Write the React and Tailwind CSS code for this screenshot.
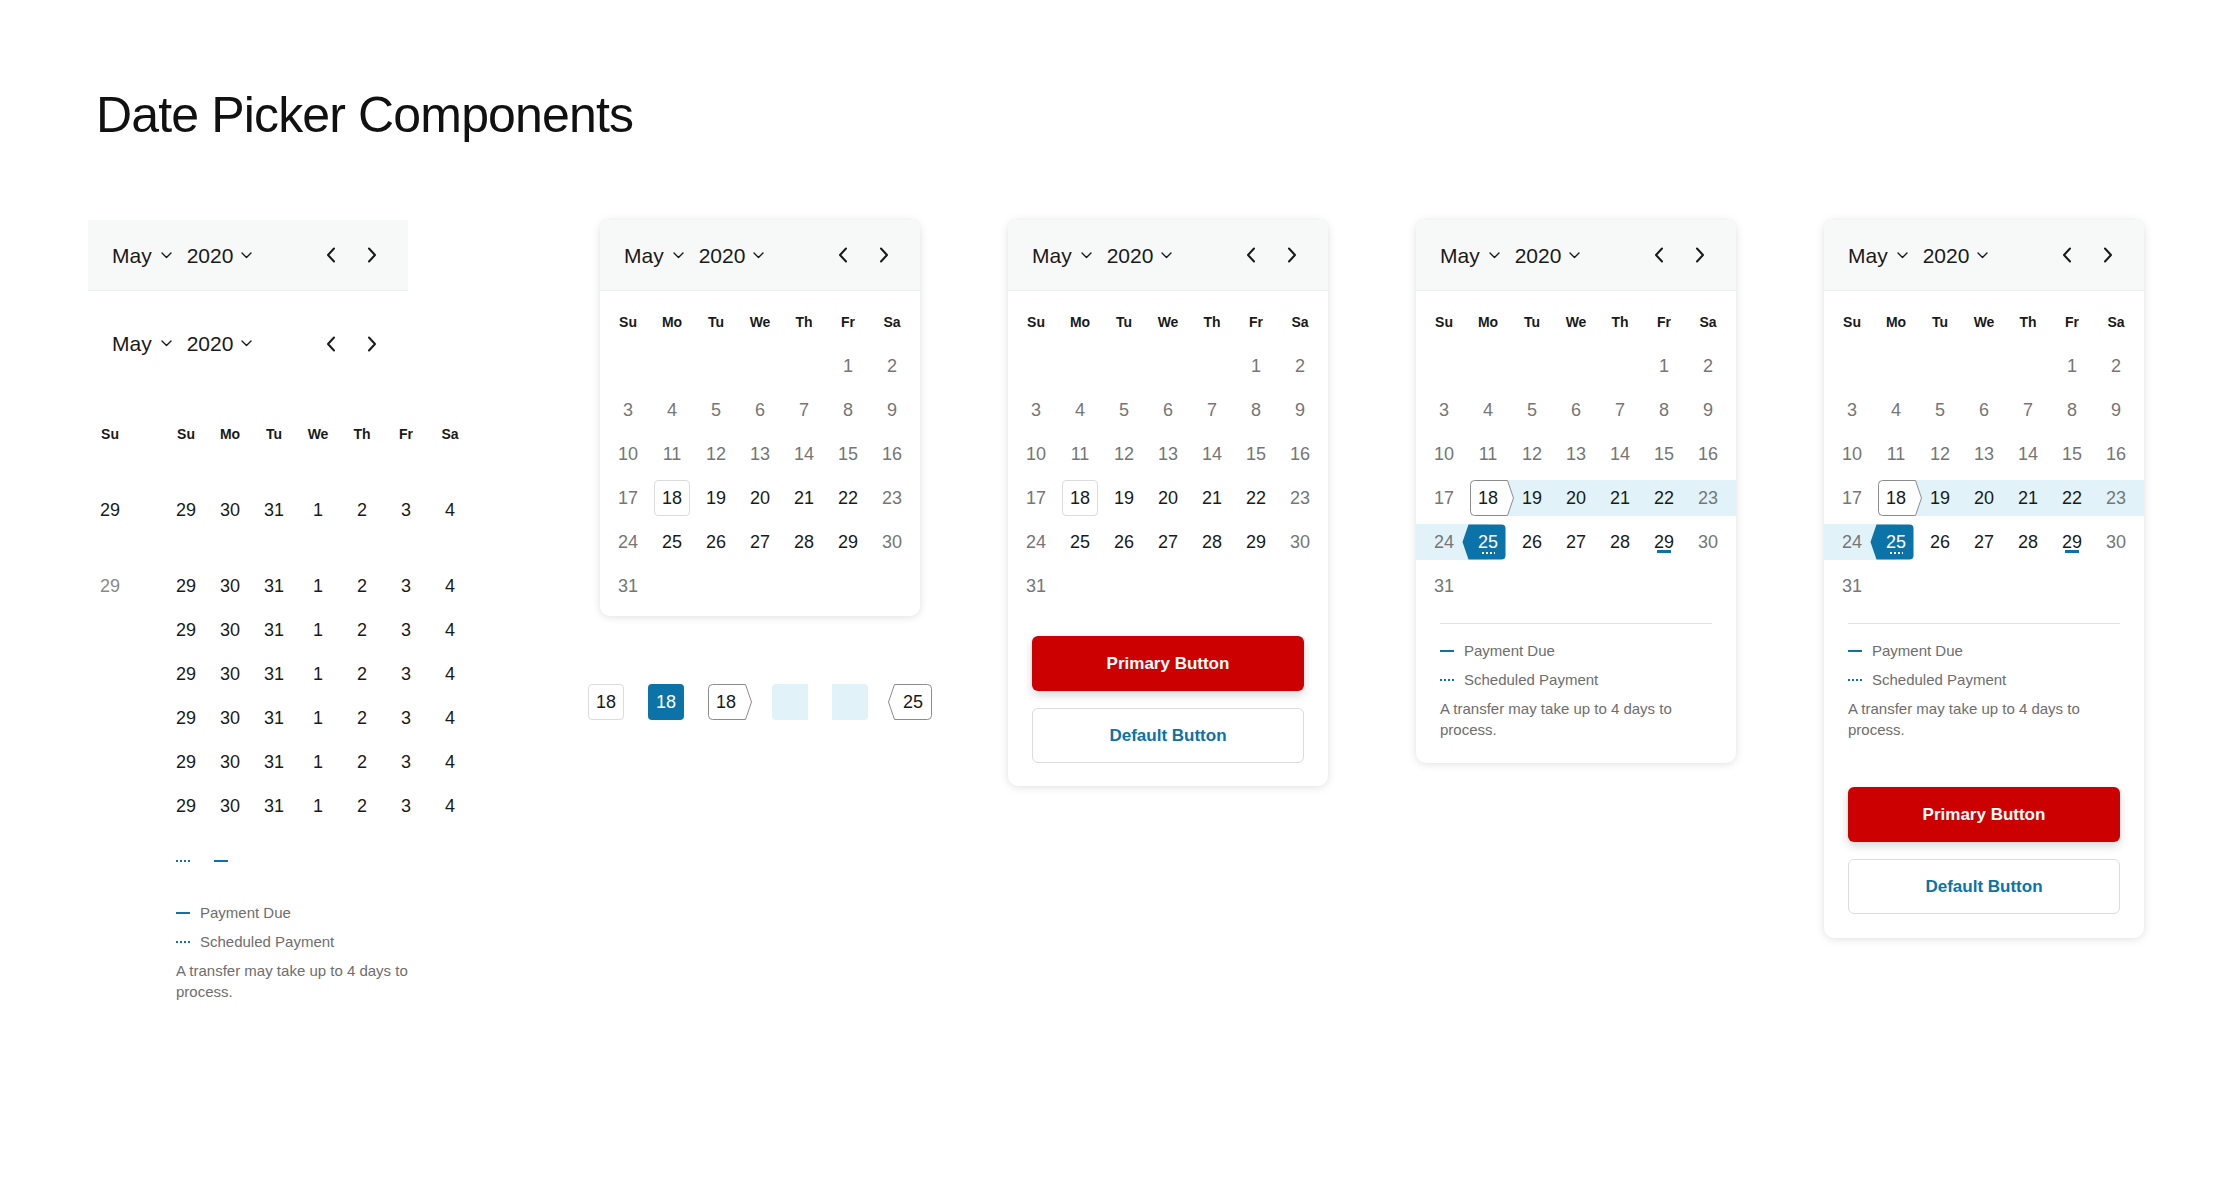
import React from 'react';

const WEEK = ['Su', 'Mo', 'Tu', 'We', 'Th', 'Fr', 'Sa'];
const MONTH = [
  [null, null, null, null, null, 1, 2],
  [3, 4, 5, 6, 7, 8, 9],
  [10, 11, 12, 13, 14, 15, 16],
  [17, 18, 19, 20, 21, 22, 23],
  [24, 25, 26, 27, 28, 29, 30],
  [31, null, null, null, null, null, null],
];

function isActive(d) {
  return (d >= 18 && d <= 22) || (d >= 25 && d <= 29);
}

function ChevronDown() {
  return (
    <svg width="11" height="7" viewBox="0 0 11 7" fill="none">
      <path d="M1 1L5.5 5.5L10 1" stroke="#1a1a1a" strokeWidth="1.4" strokeLinecap="round" strokeLinejoin="round" />
    </svg>
  );
}

function ChevronLeft() {
  return (
    <svg width="10" height="16" viewBox="0 0 10 16" fill="none">
      <path d="M8 1.5L2 8L8 14.5" stroke="#1a1a1a" strokeWidth="2" strokeLinecap="round" strokeLinejoin="round" />
    </svg>
  );
}

function ChevronRight() {
  return (
    <svg width="10" height="16" viewBox="0 0 10 16" fill="none">
      <path d="M2 1.5L8 8L2 14.5" stroke="#1a1a1a" strokeWidth="2" strokeLinecap="round" strokeLinejoin="round" />
    </svg>
  );
}

function Header({ shaded }) {
  return (
    <div
      className={
        shaded
          ? 'flex h-[71px] items-center border-b border-[#eceff0] bg-[#f7f9f9] px-6'
          : 'flex h-[71px] items-center px-6'
      }
    >
      <span className="text-[21px] leading-none text-[#1a1a1a]">May</span>
      <span className="ml-[9px] flex items-center">
        <ChevronDown />
      </span>
      <span className="ml-[15px] text-[21px] leading-none text-[#1a1a1a]">2020</span>
      <span className="ml-[8px] flex items-center">
        <ChevronDown />
      </span>
      <div className="ml-auto flex items-center gap-[17px]">
        <span className="flex h-6 w-6 items-center justify-center">
          <ChevronLeft />
        </span>
        <span className="flex h-6 w-6 items-center justify-center">
          <ChevronRight />
        </span>
      </div>
    </div>
  );
}

function HexRight({ stroke = '#8c8c8c', fill = 'white' }) {
  return (
    <svg width="45" height="36" viewBox="0 0 45 36" fill="none">
      <path
        d="M4.5 0.5H37.5L43.5 18L37.5 35.5H4.5Q0.5 35.5 0.5 31.5V4.5Q0.5 0.5 4.5 0.5Z"
        fill={fill}
        stroke={stroke}
        strokeWidth="1"
      />
    </svg>
  );
}

function HexLeft({ stroke = 'none', fill = '#0b73a8' }) {
  return (
    <svg width="45" height="36" viewBox="0 0 45 36" fill="none">
      <path
        d="M7.5 0.5H40.5Q44.5 0.5 44.5 4.5V31.5Q44.5 35.5 40.5 35.5H7.5L1.5 18Z"
        fill={fill}
        stroke={stroke}
        strokeWidth="1"
      />
    </svg>
  );
}

function Dotted({ color }) {
  return (
    <span
      className={
        color === 'white'
          ? 'block h-[2px] w-[13px] bg-[repeating-linear-gradient(to_right,#ffffff_0_2px,transparent_2px_4px)]'
          : 'block h-[2px] w-[14px] bg-[repeating-linear-gradient(to_right,#0b73a8_0_2px,transparent_2px_4px)]'
      }
    />
  );
}

function WeekdayRow() {
  return (
    <div className="flex h-[44px] items-center px-[6px]">
      {WEEK.map((w) => (
        <div key={w} className="flex w-[44px] items-center justify-center text-[14px] font-bold text-[#1a1a1a]">
          {w}
        </div>
      ))}
    </div>
  );
}

function DayCell({ d, mode }) {
  const color = isActive(d) ? 'text-[#1a1a1a]' : 'text-[#767676]';
  if (d === null) return <div className="h-[36px] w-[44px] shrink-0" />;
  if (d === 18 && mode === 'basic') {
    return (
      <div className="flex h-[36px] w-[44px] shrink-0 items-center justify-center">
        <div className="flex h-[36px] w-[36px] items-center justify-center rounded-[4px] border border-[#dcdcdc] text-[18px] text-[#1a1a1a]">
          18
        </div>
      </div>
    );
  }
  if (d === 18 && mode === 'range') {
    return (
      <div className="relative flex h-[36px] w-[44px] shrink-0 items-center justify-center">
        <span className="absolute left-[4px] top-0">
          <HexRight />
        </span>
        <span className="relative text-[18px] text-[#1a1a1a]">18</span>
      </div>
    );
  }
  if (d === 25 && mode === 'range') {
    return (
      <div className="relative flex h-[36px] w-[44px] shrink-0 items-center justify-center">
        <span className="absolute left-[-5px] top-0">
          <HexLeft />
        </span>
        <span className="relative text-[18px] text-white">25</span>
        <span className="absolute bottom-[6px] left-[16px]">
          <Dotted color="white" />
        </span>
      </div>
    );
  }
  if (d === 29 && mode === 'range') {
    return (
      <div className="relative flex h-[36px] w-[44px] shrink-0 items-center justify-center">
        <span className="text-[18px] text-[#1a1a1a]">29</span>
        <span className="absolute bottom-[7px] left-[15px] h-[3px] w-[14px] bg-[#0b73a8]" />
      </div>
    );
  }
  return (
    <div className={'flex h-[36px] w-[44px] shrink-0 items-center justify-center text-[18px] ' + color}>{d}</div>
  );
}

function Grid({ mode }) {
  return (
    <div className="pt-[9px]">
      <WeekdayRow />
      {MONTH.map((row, i) => {
        let strip = 'flex h-[36px] w-full px-[6px]';
        if (mode === 'range' && i === 3) {
          strip = 'flex h-[36px] w-full px-[6px] bg-[linear-gradient(to_right,transparent_72px,#e1f3f9_72px)]';
        }
        if (mode === 'range' && i === 4) {
          strip = 'flex h-[36px] w-full px-[6px] bg-[linear-gradient(to_right,#e1f3f9_72px,transparent_72px)]';
        }
        return (
          <div key={i} className="flex h-[44px] items-center">
            <div className={strip}>
              {row.map((d, j) => (
                <DayCell key={j} d={d} mode={mode} />
              ))}
            </div>
          </div>
        );
      })}
    </div>
  );
}

function Legend({ className }) {
  return (
    <div className={'text-[15px] text-[#6e6e6e] ' + className}>
      <div className="flex h-[21px] items-center">
        <span className="block h-[2px] w-[14px] bg-[#0b73a8]" />
        <span className="ml-[10px] leading-[21px]">Payment Due</span>
      </div>
      <div className="mt-[8px] flex h-[21px] items-center">
        <Dotted />
        <span className="ml-[10px] leading-[21px]">Scheduled Payment</span>
      </div>
      <p className="mt-[8px] leading-[21px]">A transfer may take up to 4 days to process.</p>
    </div>
  );
}

function Buttons({ className }) {
  return (
    <div className={'px-6 ' + className}>
      <button className="flex h-[55px] w-full items-center justify-center rounded-[6px] bg-[#cc0000] text-[17px] font-bold text-white shadow-[0_4px_10px_rgba(0,0,0,0.16)]">
        Primary Button
      </button>
      <button className="mt-[17px] flex h-[55px] w-full items-center justify-center rounded-[6px] border border-[#dcdcdc] bg-white text-[17px] font-bold text-[#0b73a8]">
        Default Button
      </button>
    </div>
  );
}

function Card({ children }) {
  return (
    <div className="w-[320px] overflow-hidden rounded-[10px] bg-white shadow-[0_1px_8px_rgba(0,0,0,0.13)]">
      {children}
    </div>
  );
}

function Column1() {
  const cells = [29, 30, 31, 1, 2, 3, 4];
  const Row = ({ lone, loneGray }) => (
    <div className="flex h-[44px] items-center">
      <div
        className={
          loneGray
            ? 'flex w-[44px] items-center justify-center text-[18px] text-[#8a8a8a]'
            : 'flex w-[44px] items-center justify-center text-[18px] text-[#1a1a1a]'
        }
      >
        {lone}
      </div>
      <div className="ml-[32px] flex">
        {cells.map((c, i) => (
          <div key={i} className="flex w-[44px] items-center justify-center text-[18px] text-[#1a1a1a]">
            {c}
          </div>
        ))}
      </div>
    </div>
  );
  return (
    <div className="w-[424px] shrink-0">
      <div className="w-[320px]">
        <Header shaded />
      </div>
      <div className="mt-[17px] w-[320px]">
        <Header />
      </div>
      <div className="mt-[33px] flex h-[44px] items-center">
        <div className="flex w-[44px] items-center justify-center text-[14px] font-bold text-[#1a1a1a]">Su</div>
        <div className="ml-[32px] flex">
          {WEEK.map((w) => (
            <div key={w} className="flex w-[44px] items-center justify-center text-[14px] font-bold text-[#1a1a1a]">
              {w}
            </div>
          ))}
        </div>
      </div>
      <div className="mt-[32px]">
        <Row lone={29} />
      </div>
      <div className="mt-[32px]">
        <Row lone={29} loneGray />
        <Row />
        <Row />
        <Row />
        <Row />
        <Row />
      </div>
      <div className="ml-[88px] mt-[32px] flex items-center">
        <Dotted />
        <span className="ml-[24px] block h-[2px] w-[14px] bg-[#0b73a8]" />
      </div>
      <div className="ml-[88px] mt-[40px] w-[272px]">
        <Legend />
      </div>
    </div>
  );
}

function States() {
  return (
    <div className="ml-[-12px] mt-[68px] flex w-max items-center">
      <div className="flex h-[36px] w-[36px] shrink-0 items-center justify-center rounded-[4px] border border-[#dcdcdc] text-[18px] text-[#1a1a1a]">
        18
      </div>
      <div className="ml-[24px] flex h-[36px] w-[36px] shrink-0 items-center justify-center rounded-[4px] bg-[#0b73a8] text-[18px] text-white">
        18
      </div>
      <div className="relative ml-[24px] flex h-[36px] w-[45px] shrink-0 items-center">
        <span className="absolute left-0 top-0">
          <HexRight />
        </span>
        <span className="relative flex w-[36px] justify-center text-[18px] text-[#1a1a1a]">18</span>
      </div>
      <div className="ml-[19px] h-[36px] w-[36px] shrink-0 rounded-l-[4px] bg-[#e1f3f9]" />
      <div className="ml-[24px] h-[36px] w-[36px] shrink-0 rounded-r-[4px] bg-[#e1f3f9]" />
      <div className="relative ml-[19px] flex h-[36px] w-[45px] shrink-0 items-center">
        <span className="absolute left-0 top-0">
          <HexLeft stroke="#8c8c8c" fill="white" />
        </span>
        <span className="relative ml-[8px] flex w-[36px] justify-center text-[18px] text-[#1a1a1a]">25</span>
      </div>
    </div>
  );
}

export default function App() {
  return (
    <div className="min-h-[1200px] w-[2240px] bg-white pt-[90px] font-['Liberation_Sans',Arial,sans-serif] text-[#1a1a1a]">
      <h1 className="pl-[96px] text-[50px] leading-[50px] tracking-[-0.85px] text-[#111111]">Date Picker Components</h1>
      <div className="mt-[80px] flex items-start pl-[88px]">
        <Column1 />
        <div className="ml-[88px] w-[320px] shrink-0">
          <Card>
            <Header shaded />
            <div className="pb-[8px]">
              <Grid mode="basic" />
            </div>
          </Card>
          <States />
        </div>
        <div className="ml-[88px] shrink-0">
          <Card>
            <Header shaded />
            <Grid mode="basic" />
            <Buttons className="pb-[23px] pt-[28px]" />
          </Card>
        </div>
        <div className="ml-[88px] shrink-0">
          <Card>
            <Header shaded />
            <Grid mode="range" />
            <div className="mx-6 mt-[15px] h-px bg-[#e2e2e2]" />
            <Legend className="px-6 pb-[23px] pt-[16px]" />
          </Card>
        </div>
        <div className="ml-[88px] shrink-0">
          <Card>
            <Header shaded />
            <Grid mode="range" />
            <div className="mx-6 mt-[15px] h-px bg-[#e2e2e2]" />
            <Legend className="px-6 pt-[16px]" />
            <Buttons className="pb-[24px] pt-[47px]" />
          </Card>
        </div>
      </div>
    </div>
  );
}
